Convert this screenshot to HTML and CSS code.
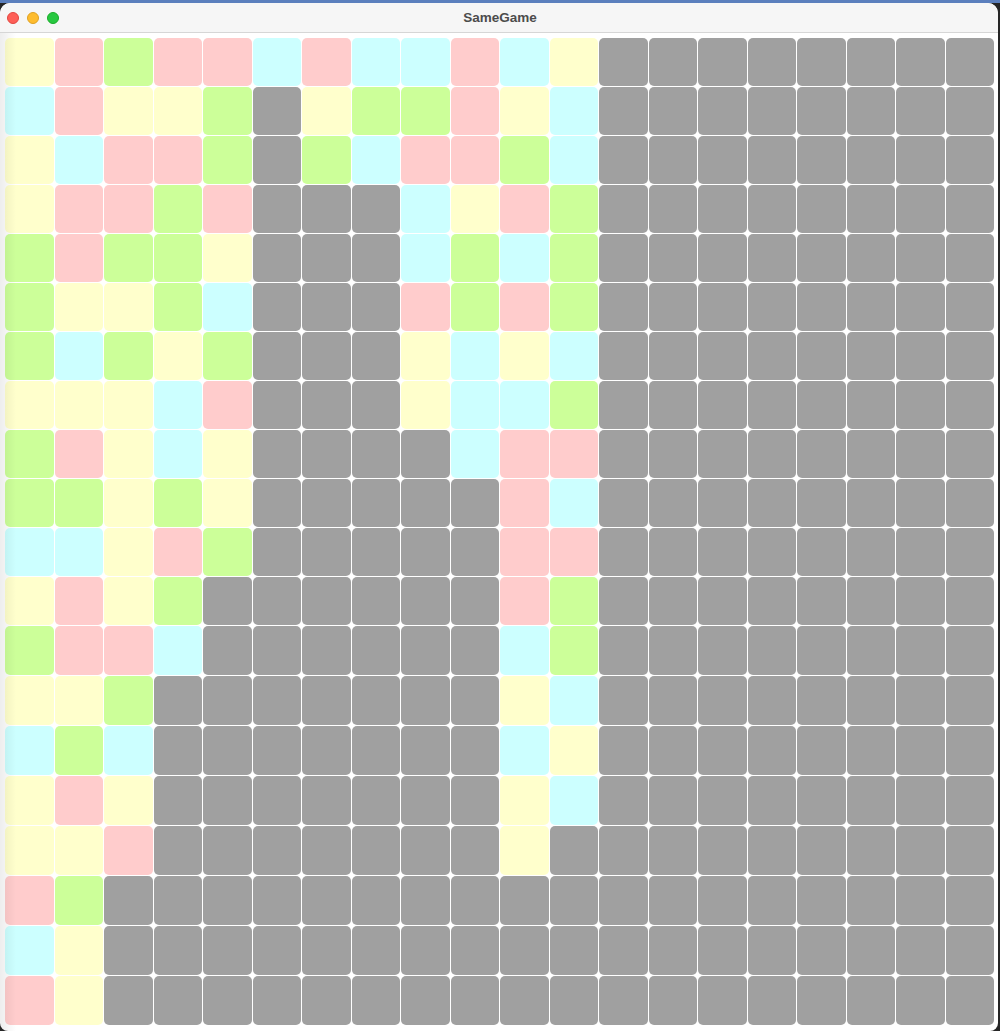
FILE: index.html
```html
<!DOCTYPE html>
<html lang="en">
<head>
  <meta charset="UTF-8" />
  <meta name="viewport" content="width=device-width, initial-scale=1.0"/>
  <title>SameGame</title>
  <link rel="stylesheet" href="styles.css">
</head>
<body>
  <div class="window">
    <div class="titlebar">
      <div class="lights">
        <span class="light close"></span>
        <span class="light min"></span>
        <span class="light max"></span>
      </div>
      <span class="title">SameGame</span>
    </div>
    <div class="content">
      <div id="board" class="board"></div>
    </div>
  </div>

  <script>
    // one string per row, Y=yellow P=pink G=green C=cyan X=cleared
    const rows = [
      "YPGPPCPCCPCYXXXXXXXX",
      "CPYYGXYGGPYCXXXXXXXX",
      "YCPPGXGCPPGCXXXXXXXX",
      "YPPGPXXXCYPGXXXXXXXX",
      "GPGGYXXXCGCGXXXXXXXX",
      "GYYGCXXXPGPGXXXXXXXX",
      "GCGYGXXXYCYCXXXXXXXX",
      "YYYCPXXXYCCGXXXXXXXX",
      "GPYCYXXXXCPPXXXXXXXX",
      "GGYGYXXXXXPCXXXXXXXX",
      "CCYPGXXXXXPPXXXXXXXX",
      "YPYGXXXXXXPGXXXXXXXX",
      "GPPCXXXXXXCGXXXXXXXX",
      "YYGXXXXXXXYCXXXXXXXX",
      "CGCXXXXXXXCYXXXXXXXX",
      "YPYXXXXXXXYCXXXXXXXX",
      "YYPXXXXXXXYXXXXXXXXX",
      "PGXXXXXXXXXXXXXXXXXX",
      "CYXXXXXXXXXXXXXXXXXX",
      "PYXXXXXXXXXXXXXXXXXX"
    ];

    const names = { Y: 'yellow', P: 'pink', G: 'green', C: 'cyan', X: 'empty' };

    const board = document.getElementById('board');
    rows.forEach(function (row) {
      for (const ch of row) {
        const cell = document.createElement('div');
        cell.className = 'cell ' + names[ch];
        board.appendChild(cell);
      }
    });
  </script>
</body>
</html>
```

FILE: styles.css
```css
body {
  margin: 0;
  padding-top: 3px;
  height: 1028px;
  background: linear-gradient(#5b7fbd 0, #5b7fbd 3px, #262626 3px);
  font-family: 'Liberation Sans', Arial, sans-serif;
  overflow: hidden;
}

.window {
  width: 998px;
  height: 1028px;
  background: #fff;
  border-radius: 10px 10px 8px 8px;
  overflow: hidden;
  display: flex;
  flex-direction: column;
}

.titlebar {
  height: 29px;
  background: #f6f6f6;
  border-bottom: 1px solid #d6d6d6;
  display: flex;
  align-items: center;
  justify-content: center;
  position: relative;
}

.lights {
  position: absolute;
  left: 7px;
  top: 9px;
  display: flex;
  gap: 8px;
}

.light {
  width: 12px;
  height: 12px;
  border-radius: 50%;
  box-sizing: border-box;
}

.close { background: #fe5f57; border: 1px solid #e14640; }
.min { background: #febc2e; border: 1px solid #dea123; }
.max { background: #28c840; border: 1px solid #1aab29; }

.title {
  font-size: 13.5px;
  font-weight: bold;
  color: #4c4c4c;
  margin-left: 2px;
}

.content {
  flex: 1;
  padding: 5px 0 0 5px;
  position: relative;
}

.content::before {
  content: "";
  position: absolute;
  left: 0;
  top: 0;
  bottom: 0;
  width: 16px;
  background: linear-gradient(to right, rgba(0, 0, 0, 0.07), rgba(0, 0, 0, 0));
  pointer-events: none;
}

.board {
  width: 989px;
  display: grid;
  grid-template-columns: repeat(20, 1fr);
  grid-template-rows: repeat(12, 48px) repeat(8, 49px);
  gap: 1px;
}

.cell { border-radius: 5px; }

.yellow { background: #ffffcc; }
.pink { background: #ffcccc; }
.green { background: #ccff99; }
.cyan { background: #ccffff; }
.empty { background: #a0a0a0; }
```
